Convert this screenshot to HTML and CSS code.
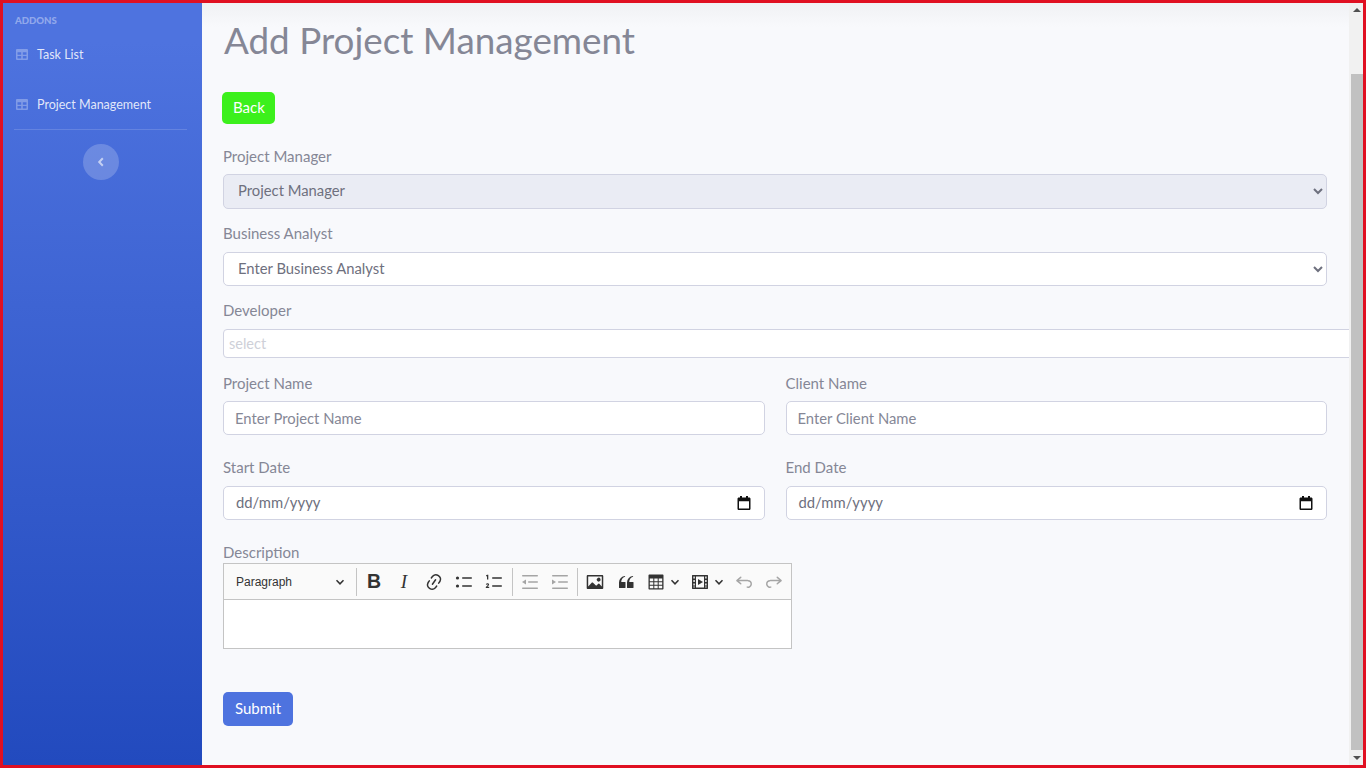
FILE: index.html
```html
<!DOCTYPE html>
<html lang="en">
<head>
  <meta charset="UTF-8">
  <meta name="viewport" content="width=device-width, initial-scale=1.0">
  <title>Add Project Management</title>
  <link rel="stylesheet" href="styles.css">
</head>
<body>
  <div class="frame">
    <div class="sidebar">
      <div class="side-heading">ADDONS</div>
      <a class="side-link" href="#">
        <svg class="side-icon" viewBox="0 0 12 11"><path d="M1 0h10a1 1 0 0 1 1 1v9a1 1 0 0 1-1 1H1a1 1 0 0 1-1-1V1a1 1 0 0 1 1-1zm.5 3.200v2.600h3.700V3.200zm5.300 0v2.600h3.700V3.200zM1.500 7v2.500h3.700V7zm5.300 0v2.500h3.700V7z" fill-rule="evenodd"/></svg>
        <span>Task List</span>
      </a>
      <a class="side-link" href="#">
        <svg class="side-icon" viewBox="0 0 12 11"><path d="M1 0h10a1 1 0 0 1 1 1v9a1 1 0 0 1-1 1H1a1 1 0 0 1-1-1V1a1 1 0 0 1 1-1zm.5 3.200v2.600h3.700V3.200zm5.300 0v2.600h3.700V3.200zM1.500 7v2.500h3.700V7zm5.300 0v2.500h3.700V7z" fill-rule="evenodd"/></svg>
        <span>Project Management</span>
      </a>
      <hr class="side-divider">
      <div class="side-toggle">
        <svg viewBox="0 0 8 10" width="8" height="10"><path d="M5.800 1.200 2.200 5l3.600 3.800" fill="none" stroke="currentColor" stroke-width="2"/></svg>
      </div>
    </div>

    <div class="main">
      <h1>Add Project Management</h1>
      <a class="btn btn-back" href="#">Back</a>

      <div class="field first">
        <label>Project Manager</label>
        <select class="control tall" disabled><option>Project Manager</option></select>
      </div>
      <div class="field">
        <label class="gap7">Business Analyst</label>
        <select class="control"><option>Enter Business Analyst</option></select>
      </div>
      <div class="field">
        <label class="gap7">Developer</label>
        <input class="multi" type="text" placeholder="select">
      </div>

      <div class="row">
        <div class="field">
          <label>Project Name</label>
          <input class="control text" type="text" placeholder="Enter Project Name">
        </div>
        <div class="field">
          <label>Client Name</label>
          <input class="control text" type="text" placeholder="Enter Client Name">
        </div>
      </div>

      <div class="row spaced">
        <div class="field">
          <label class="gap7">Start Date</label>
          <div class="control date">
            <span>dd/mm/yyyy</span>
            <svg viewBox="0 0 14 14" width="14" height="14"><path d="M3 0h2v1.500h4V0h2v1.500h1.200c.7 0 1.300.6 1.300 1.300v9.900c0 .7-.6 1.300-1.300 1.300H1.800c-.7 0-1.300-.6-1.300-1.300V2.800c0-.7.6-1.300 1.300-1.300H3zM2 5.200v7.300h10V5.200z" fill="#111" fill-rule="evenodd"/></svg>
          </div>
        </div>
        <div class="field">
          <label class="gap7">End Date</label>
          <div class="control date">
            <span>dd/mm/yyyy</span>
            <svg viewBox="0 0 14 14" width="14" height="14"><path d="M3 0h2v1.500h4V0h2v1.500h1.200c.7 0 1.300.6 1.300 1.300v9.900c0 .7-.6 1.300-1.300 1.300H1.800c-.7 0-1.300-.6-1.300-1.300V2.800c0-.7.6-1.300 1.300-1.300H3zM2 5.200v7.300h10V5.200z" fill="#111" fill-rule="evenodd"/></svg>
          </div>
        </div>
      </div>

      <div class="field desc">
        <label class="tight">Description</label>
        <div class="editor">
          <div class="toolbar">
            <div class="para">
              <span>Paragraph</span>
              <svg class="chev" viewBox="0 0 10 10"><path d="M1.500 3.200 5 6.800l3.500-3.600" fill="none" stroke="#333" stroke-width="1.500"/></svg>
            </div>
            <span class="sep"></span>
            <span class="tool tool-b">B</span>
            <span class="tool tool-i">I</span>
            <span class="tool"><svg viewBox="0 0 20 20"><path d="m11.077 15 .991-1.416a.75.75 0 1 1 1.229.86l-1.148 1.64a.748.748 0 0 1-.217.206 5.251 5.251 0 0 1-8.503-5.955.741.741 0 0 1 .12-.274l1.147-1.639a.75.75 0 1 1 1.228.86L4.933 10.700l.006.003a3.750 3.750 0 0 0 6.132 4.294l.006.004zm5.494-5.335a.748.748 0 0 1-.12.274l-1.147 1.639a.75.75 0 1 1-1.228-.86l.86-1.230a3.750 3.750 0 0 0-6.144-4.301l-.86 1.229a.75.75 0 0 1-1.229-.86l1.148-1.640a.748.748 0 0 1 .217-.206 5.251 5.251 0 0 1 8.503 5.955zm-4.563-2.532a.75.75 0 0 1 .184 1.045l-3.155 4.505a.75.75 0 1 1-1.229-.86l3.155-4.506a.75.75 0 0 1 1.045-.184z"/></svg></span>
            <span class="tool"><svg viewBox="0 0 20 20"><circle cx="3.500" cy="6" r="1.600"/><circle cx="3.500" cy="14" r="1.600"/><rect x="8" y="5.200" width="10" height="1.600" rx=".7"/><rect x="8" y="13.200" width="10" height="1.600" rx=".7"/></svg></span>
            <span class="tool"><svg viewBox="0 0 20 20"><path d="M3 2.800h1.300v4.700H3V4.100l-1 .3v-1zM1.800 12.400c.3-.8.9-1.200 1.700-1.200 1 0 1.600.6 1.600 1.400 0 .6-.4 1.100-.9 1.500l-.8.7h1.800v1.100H1.800v-1l1.600-1.500c.3-.3.4-.5.4-.7 0-.3-.1-.5-.4-.5s-.5.2-.6.6z"/><rect x="8" y="5.200" width="10" height="1.600" rx=".7"/><rect x="8" y="13.200" width="10" height="1.600" rx=".7"/></svg></span>
            <span class="sep wide"></span>
            <span class="tool off"><svg viewBox="0 0 20 20"><rect x="2" y="3" width="16" height="1.500" rx=".7"/><rect x="8" y="9.200" width="10" height="1.500" rx=".7"/><rect x="2" y="15.500" width="16" height="1.500" rx=".7"/><path d="M2 10 6 7.400v5.200z"/></svg></span>
            <span class="tool off"><svg viewBox="0 0 20 20"><rect x="2" y="3" width="16" height="1.500" rx=".7"/><rect x="8" y="9.200" width="10" height="1.500" rx=".7"/><rect x="2" y="15.500" width="16" height="1.500" rx=".7"/><path d="M6 10 2 7.400v5.200z"/></svg></span>
            <span class="sep"></span>
            <span class="tool"><svg viewBox="0 0 20 20"><path d="M6.910 10.540c.26-.23.64-.21.88.03l3.360 3.140 2.230-2.060a.64.64 0 0 1 .87 0l2.520 2.970V4.500H3.200v10.120l3.710-4.080zm10.270-7.510c.6 0 1.090.47 1.090 1.050v11.840c0 .59-.49 1.060-1.090 1.060H2.790c-.6 0-1.090-.47-1.090-1.060V4.080c0-.58.49-1.050 1.100-1.050h14.380zm-5.220 5.560a1.960 1.960 0 1 1 3.400-1.960 1.960 1.960 0 0 1-3.400 1.960z"/></svg></span>
            <span class="tool tool-quote"><svg viewBox="0 0 20 20"><path d="M3 10.423a6.500 6.500 0 0 1 6.056-6.408l.038.67C6.448 5.423 5.354 7.663 5.220 10H9c.552 0 .5.432.5.986v4.511c0 .554-.448.503-1 .503h-5c-.552 0-.5-.449-.5-1.003v-4.574zm8 0a6.500 6.500 0 0 1 6.056-6.408l.038.67c-2.646.739-3.740 2.979-3.873 5.315H17c.552 0 .5.432.5.986v4.511c0 .554-.448.503-1 .503h-5c-.552 0-.5-.449-.5-1.003v-4.574z"/></svg></span>
            <span class="tool tool-drop"><svg viewBox="0 0 20 20"><path d="M3.500 2.500h13c.6 0 1 .4 1 1v13c0 .6-.4 1-1 1h-13c-.6 0-1-.4-1-1v-13c0-.6.4-1 1-1zM3.800 6.500v2.800h3.500V6.500zm4.500 0v2.800h3.400V6.500zm4.400 0v2.800h3.500V6.500zM3.800 10.300v2.500h3.500v-2.500zm4.500 0v2.500h3.400v-2.500zm4.400 0v2.500h3.500v-2.500zM3.800 13.800v2.400h3.500v-2.400zm4.500 0v2.400h3.400v-2.400zm4.400 0v2.400h3.500v-2.400z" fill-rule="evenodd"/></svg><svg class="chev" viewBox="0 0 10 10"><path d="M1.500 3.200 5 6.800l3.500-3.600" fill="none" stroke="#333" stroke-width="1.500"/></svg></span>
            <span class="tool tool-drop"><svg viewBox="0 0 20 20"><path d="M2.500 3h15c.3 0 .5.2.5.5v13c0 .3-.2.5-.5.5h-15c-.3 0-.5-.2-.5-.5v-13c0-.3.2-.5.5-.5zM3.400 4.500v2h1.400v-2zm0 3.500v2h1.400V8zm0 3.500v2h1.400v-2zm0 2.900v1.100h1.400v-1.100zM15.200 4.500v2h1.400v-2zm0 3.500v2h1.400V8zm0 3.500v2h1.400v-2zm0 2.900v1.100h1.400v-1.100zM6 4.500v11h8v-11z" fill-rule="evenodd"/><path d="M8 7l5 3-5 3z"/></svg><svg class="chev" viewBox="0 0 10 10"><path d="M1.500 3.200 5 6.800l3.500-3.600" fill="none" stroke="#333" stroke-width="1.500"/></svg></span>
            <span class="tool off"><svg viewBox="0 0 20 20"><path d="m5.042 9.367 2.189 1.837a.75.75 0 0 1-.965 1.149l-3.788-3.180a.747.747 0 0 1-.21-.284.75.75 0 0 1 .17-.945L6.230 4.762a.75.75 0 1 1 .964 1.150L4.863 7.866h8.917A.75.75 0 0 1 14 7.900a4 4 0 1 1-1.477 7.718l.344-1.489a2.500 2.500 0 1 0 1.094-4.730l.008-.032H5.042z"/></svg></span>
            <span class="tool off"><svg viewBox="0 0 20 20"><path d="m14.958 9.367-2.189 1.837a.75.75 0 0 0 .965 1.149l3.788-3.180a.747.747 0 0 0 .21-.284.75.75 0 0 0-.17-.945L13.770 4.762a.75.75 0 1 0-.964 1.150l2.331 1.955H6.220A.75.75 0 0 0 6 7.900a4 4 0 1 0 1.477 7.718l-.344-1.489A2.500 2.500 0 1 1 6.039 9.400l-.008-.032h8.927z"/></svg></span>
          </div>
          <div class="editor-body"></div>
        </div>
      </div>

      <button class="btn btn-submit">Submit</button>
    </div>

    <div class="scrollbar">
      <div class="arrow up"></div>
      <div class="thumb-track"><div class="thumb"></div></div>
      <div class="arrow down"></div>
    </div>
  </div>
</body>
</html>
```

FILE: styles.css
```css
* {
  box-sizing: border-box;
}
html, body {
  margin: 0;
  height: 100%;
  overflow: hidden;
}
body {
  font-family: "Lato", "Open Sans", sans-serif;
  font-size: 15px;
  color: #858796;
}
a {
  text-decoration: none;
}
.frame {
  display: flex;
  width: 1366px;
  height: 768px;
  border: 3px solid #e01022;
  background: #f8f9fc;
}

/* sidebar */
.sidebar {
  width: 199px;
  flex-shrink: 0;
  padding: 11px 15px 0 11px;
  background: linear-gradient(180deg, #4e73df 5%, #224abe 100%);
}
.side-heading {
  font-size: 9.6px;
  font-weight: 900;
  line-height: 13px;
  color: rgba(255, 255, 255, 0.4);
  margin-left: 1px;
}
.side-link {
  display: flex;
  align-items: center;
  height: 20px;
  margin-top: 30px;
  margin-left: 2px;
  font-size: 12.5px;
  color: rgba(255, 255, 255, 0.85);
}
.side-heading + .side-link {
  margin-top: 17px;
}
.side-icon {
  width: 12px;
  height: 11px;
  margin-right: 9px;
  fill: rgba(255, 255, 255, 0.3);
}
.side-divider {
  margin: 15px 0 14px;
  border: 0;
  border-top: 1px solid rgba(255, 255, 255, 0.15);
}
.side-toggle {
  display: flex;
  align-items: center;
  justify-content: center;
  width: 36px;
  height: 36px;
  margin-left: 69px;
  border-radius: 50%;
  background: rgba(255, 255, 255, 0.2);
  color: rgba(255, 255, 255, 0.6);
}

/* main column */
.main {
  flex: 1;
  min-width: 0;
  overflow: hidden;
  padding: 13px 22px 0 21px;
  background: linear-gradient(180deg, #f0f1f4 0, #f8f9fc 24px);
}
h1 {
  margin: 0 0 28px 1px;
  font-size: 36.8px;
  font-weight: 400;
  line-height: 48px;
  color: #858796;
}
.btn {
  display: inline-block;
  border: 1px solid transparent;
  border-radius: 5px;
  color: #fff;
  font-family: inherit;
  font-size: 15px;
  line-height: 24px;
}
.btn-back {
  margin-left: -1px;
  padding: 2px 9.5px 4px 10px;
  background: #3cf01c;
}
.btn-submit {
  display: block;
  margin-top: 43px;
  padding: 3px 11px 5px;
  background: #4e73df;
}
.field {
  margin-top: 12px;
}
.field.first {
  margin-top: 20px;
}
label {
  display: block;
  line-height: 24px;
  margin-bottom: 6px;
}
label.gap7 {
  margin-bottom: 7px;
}
label.tight {
  margin-bottom: -1px;
}
.control {
  display: block;
  width: 100%;
  height: 34px;
  border: 1px solid #d1d3e2;
  border-radius: 5px;
  background: #fff;
  color: #6e707e;
  font-family: inherit;
  font-size: 14.8px;
}
.control.tall {
  height: 35px;
}
select.control {
  padding: 0 8px 2px 10px;
}
select.control.tall {
  padding-bottom: 3px;
}
select.control:disabled {
  background: #eaecf4;
  opacity: 1;
  color: #6e707e;
}
.control.text {
  padding: 0 11px 1px;
  outline: none;
}
.control.text::placeholder {
  color: #858796;
  opacity: 1;
}
.multi {
  display: block;
  width: 1180px;
  height: 29px;
  padding: 0 5px;
  border: 1px solid #d1d3e2;
  border-radius: 4px;
  background: #fff;
  font-family: inherit;
  font-size: 14.5px;
  outline: none;
}
.multi::placeholder {
  color: #ced0d8;
  opacity: 1;
}
.row {
  display: grid;
  grid-template-columns: 1fr 1fr;
  gap: 21px;
  margin-top: 13px;
}
.row .field {
  margin-top: 0;
}
.row.spaced {
  margin-top: 20px;
}
.date {
  display: flex;
  align-items: center;
  justify-content: space-between;
  padding: 0 13px 0 12px;
  color: #6e707e;
}
.date span {
  margin-bottom: 2px;
}
.desc {
  margin-top: 20px;
}

/* rich text editor */
.editor {
  width: 569px;
  border: 1px solid #c4c4c4;
  background: #fff;
}
.toolbar {
  display: flex;
  align-items: center;
  height: 36px;
  border-bottom: 1px solid #c4c4c4;
  background: #fafafa;
  color: #333;
  font-family: "Liberation Sans", Arial, sans-serif;
}
.para {
  display: flex;
  align-items: center;
  justify-content: space-between;
  width: 130px;
  padding: 0 9px 0 12px;
  font-size: 12px;
}
.chev {
  width: 10px;
  height: 10px;
}
.sep {
  width: 1px;
  height: 28px;
  margin: 0 2px;
  background: #c4c4c4;
}
.sep.wide {
  margin-left: 3px;
}
.tool {
  display: flex;
  align-items: center;
  justify-content: center;
  width: 30px;
  height: 30px;
  fill: #333;
}
.tool svg {
  width: 20px;
  height: 20px;
}
.tool svg.chev {
  width: 10px;
  height: 10px;
  margin-left: 4px;
}
.tool-drop {
  width: 44px;
  padding-left: 5px;
  justify-content: flex-start;
}
.tool-quote {
  margin-left: 1px;
}
.tool.off {
  fill: #a5a5a5;
}
.tool-b {
  font-size: 19.5px;
  font-weight: 700;
}
.tool-i {
  font-family: "Liberation Serif", serif;
  font-size: 19px;
  font-style: italic;
}
.editor-body {
  height: 48px;
}

/* fake window scrollbar */
.scrollbar {
  display: flex;
  flex-direction: column;
  width: 14px;
  flex-shrink: 0;
  background: #f1f1f1;
}
.arrow {
  height: 15px;
  padding-left: 2px;
  display: flex;
  align-items: center;
  justify-content: center;
}
.arrow.up {
  height: 13px;
}
.arrow::before {
  content: "";
  border-left: 4px solid transparent;
  border-right: 4px solid transparent;
}
.arrow.up::before {
  border-bottom: 4px solid #505050;
}
.arrow.down::before {
  border-top: 4px solid #505050;
}
.thumb-track {
  flex: 1;
  padding: 58px 0 0 2px;
}
.thumb {
  height: 676px;
  background: #c1c1c1;
}
```
